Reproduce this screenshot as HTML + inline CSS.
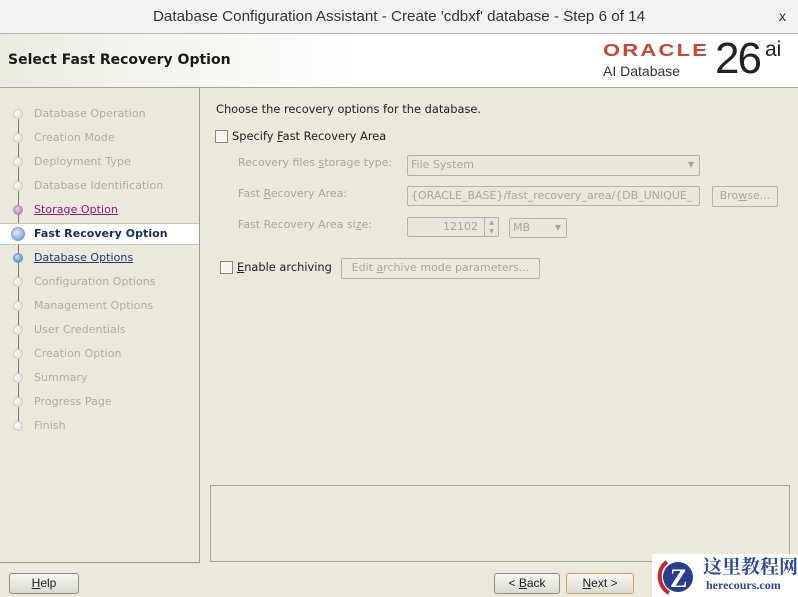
<!DOCTYPE html>
<html><head><meta charset="utf-8"><style>
*{margin:0;padding:0;box-sizing:border-box}
body{width:798px;height:597px;overflow:hidden;background:#ebe9dc;font-family:"DejaVu Sans",sans-serif;font-size:11px;color:#222;position:relative}
.a{position:absolute}
#tb{left:0;top:0;width:798px;height:34px;background:#f3f2f1;border-bottom:1px solid #b8b6b2;text-align:center;font-family:"Liberation Sans",sans-serif;font-size:15.2px;line-height:33px;color:#2e3436}
#hd{left:0;top:34px;width:798px;height:54px;background:linear-gradient(90deg,#ecebe0 0%,#fff 45%,#fff 100%);border-bottom:1px solid #a8a69a}
#hd .t{left:8px;top:18px;font-size:14px;font-weight:bold;color:#1a1a1a}
#lp{left:0;top:88px;width:200px;height:475px;border-right:1px solid #9e9c90;border-bottom:1px solid #9e9c90}
.st{position:absolute;left:34px;color:#b0aea4;letter-spacing:.05px;font-size:11px}
.dot{position:absolute;left:13px;width:10px;height:10px;border-radius:50%;background:radial-gradient(circle at 40% 35%,#fff,#d8d6cc);border:1px solid #cfcdc3}
.line{position:absolute;left:18px;width:1px;background:#7a7870}
.chk{position:absolute;width:13px;height:13px;border:1px solid #8a887e;background:#f6f5ee}
.lbl{position:absolute;color:#aaa89e;font-size:11px}
.box{position:absolute;border:1px solid #b6b4a8;background:#e9e7db;color:#aaa89e;font-size:11px;padding-left:3px;line-height:18px;border-radius:2px}
.btn{position:absolute;border:1px solid #8e8c84;border-radius:3px;background:linear-gradient(#f7f6f1,#dddbd0);text-align:center;line-height:19px;font-family:"Liberation Sans",sans-serif;font-size:12px;color:#222}
</style></head><body>
<div id="tb" class="a">Database Configuration Assistant - Create 'cdbxf' database - Step 6 of 14<span style="position:absolute;right:12px;top:0;font-size:14px">x</span></div>
<div id="hd" class="a"><div class="a t">Select Fast Recovery Option</div>
<div class="a" style="left:603px;top:6px;font-family:'Liberation Sans',sans-serif;font-size:22px;font-weight:bold;color:#c74634;letter-spacing:2.2px;transform:scaleY(.8);transform-origin:top left">ORACLE</div>
<div class="a" style="left:603px;top:29px;font-family:'Liberation Sans',sans-serif;font-size:14px;color:#333">AI Database</div>
<div class="a" style="left:715px;top:0px;font-family:'Liberation Sans',sans-serif;font-size:44px;color:#222;letter-spacing:-2px;line-height:50px">26</div>
<div class="a" style="left:765px;top:4px;font-family:'Liberation Sans',sans-serif;font-size:21px;color:#222">ai</div>
</div>
<div id="lp" class="a">
<div class="line" style="top:26px;height:312px"></div>
<div class="a" style="left:0;top:135px;width:199px;height:22px;background:#fff;border-top:1px solid #c8c6bc;border-bottom:1px solid #c8c6bc"></div>
</div>
<div class="dot" style="top:109px"></div><div class="st" style="top:107px">Database Operation</div>
<div class="dot" style="top:133px"></div><div class="st" style="top:131px">Creation Mode</div>
<div class="dot" style="top:157px"></div><div class="st" style="top:155px">Deployment Type</div>
<div class="dot" style="top:181px"></div><div class="st" style="top:179px">Database Identification</div>
<div class="dot" style="top:205px;background:radial-gradient(circle at 40% 35%,#e8d0e8,#a070a0);border-color:#b890b8"></div><div class="st" style="top:203px;color:#8b1a8b;text-decoration:underline">Storage Option</div>
<div class="dot" style="top:227px;left:11px;width:14px;height:14px;background:radial-gradient(circle at 40% 35%,#e0eefa,#5c92c8);border:1px solid #7aa4d0"></div><div class="st" style="top:227px;color:#14305c;font-weight:bold">Fast Recovery Option</div>
<div class="dot" style="top:253px;background:radial-gradient(circle at 40% 35%,#c8e0f8,#3c78c0);border-color:#6a9ad0"></div><div class="st" style="top:251px;color:#1a3a7a;text-decoration:underline">Database Options</div>
<div class="dot" style="top:277px"></div><div class="st" style="top:275px">Configuration Options</div>
<div class="dot" style="top:301px"></div><div class="st" style="top:299px">Management Options</div>
<div class="dot" style="top:325px"></div><div class="st" style="top:323px">User Credentials</div>
<div class="dot" style="top:349px"></div><div class="st" style="top:347px">Creation Option</div>
<div class="dot" style="top:373px"></div><div class="st" style="top:371px">Summary</div>
<div class="dot" style="top:397px"></div><div class="st" style="top:395px">Progress Page</div>
<div class="dot" style="top:421px"></div><div class="st" style="top:419px">Finish</div>

<div class="a" style="left:216px;top:102px;color:#222;font-size:11.4px">Choose the recovery options for the database.</div>
<div class="chk" style="left:215px;top:130px"></div>
<div class="a" style="left:232px;top:129px;color:#222;font-size:11.4px"><span>Specify </span><u>F</u>ast Recovery Area</div>
<div class="lbl" style="left:238px;top:156px">Recovery files <u>s</u>torage type:</div>
<div class="box" style="left:407px;top:155px;width:293px;height:21px">File System<span style="position:absolute;right:5px;top:0;font-size:8px">▼</span></div>
<div class="lbl" style="left:238px;top:187px">Fast <u>R</u>ecovery Area:</div>
<div class="box" style="left:407px;top:186px;width:293px;height:20px;overflow:hidden;white-space:nowrap">{ORACLE_BASE}/fast_recovery_area/{DB_UNIQUE_</div>
<div class="box" style="left:712px;top:186px;width:66px;height:21px;text-align:center;padding:0;background:#ebe9dc">Bro<u>w</u>se...</div>
<div class="lbl" style="left:238px;top:218px">Fast Recovery Area si<u>z</u>e:</div>
<div class="box" style="left:407px;top:217px;width:92px;height:20px;text-align:right;padding-right:20px">12102<span style="position:absolute;right:0;top:0;width:14px;height:18px;border-left:1px solid #b6b4a8;font-size:6px;line-height:9px;text-align:center">▲<br>▼</span></div>
<div class="box" style="left:509px;top:218px;width:58px;height:20px">MB<span style="position:absolute;right:5px;top:0;font-size:8px">▼</span></div>
<div class="chk" style="left:220px;top:261px"></div>
<div class="a" style="left:237px;top:260px;color:#222;font-size:11.4px"><u>E</u>nable archiving</div>
<div class="box" style="left:341px;top:258px;width:199px;height:21px;text-align:center;padding:0;background:#ebe9dc">Edit <u>a</u>rchive mode parameters...</div>

<div class="a" style="left:210px;top:485px;width:580px;height:77px;border:1px solid #a8a69a;background:#ebe9dc"></div>

<div class="btn" style="left:9px;top:573px;width:70px;height:21px"><u>H</u>elp</div>
<div class="btn" style="left:494px;top:573px;width:66px;height:21px">&lt; <u>B</u>ack</div>
<div class="btn" style="left:566px;top:573px;width:68px;height:21px;border-color:#c8a060"><u>N</u>ext &gt;</div>

<div class="a" style="left:652px;top:554px;width:146px;height:43px;background:#fff"></div>
<svg class="a" style="left:655px;top:556px" width="44" height="40" viewBox="0 0 44 40"><path d="M12 6 C2 12 2 30 14 37" stroke="#c0282e" stroke-width="4" fill="none"/><circle cx="23" cy="21" r="15" fill="#2a3c8c"/><text x="15" y="31" font-family="Liberation Serif,serif" font-size="26" font-weight="bold" fill="#fff">Z</text></svg>
<div class="a" style="left:703px;top:555px;font-family:'Noto Serif CJK SC','WenQuanYi Zen Hei',serif;font-size:19px;font-weight:bold;color:#2a4a9a;line-height:22px">这里教程网</div>
<div class="a" style="left:706px;top:578px;font-family:'Liberation Serif',serif;font-size:12px;font-weight:bold;color:#2a4a9a">herecours.com</div>
</body></html>
